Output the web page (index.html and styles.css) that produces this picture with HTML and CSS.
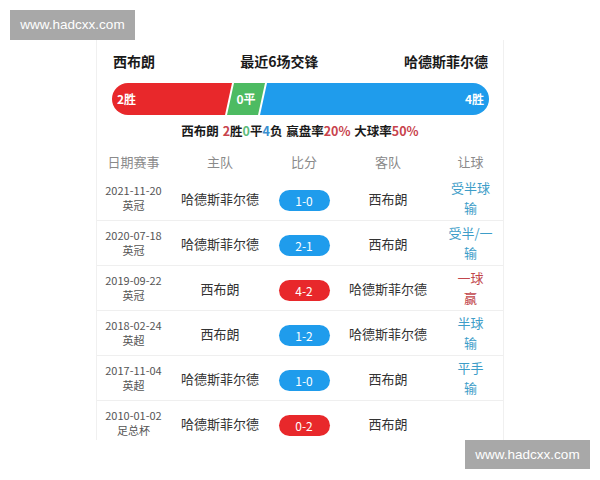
FILE: index.html
```html
<!DOCTYPE html>
<html lang="zh">
<head>
<meta charset="utf-8">
<link rel="stylesheet" href="styles.css">
</head>
<body>
<div class="page">
  <div class="card">
    <div class="head">
      <span class="team">西布朗</span>
      <span class="title">最近6场交锋</span>
      <span class="team">哈德斯菲尔德</span>
    </div>
    <div class="bar">
      <div class="seg win">2胜</div>
      <div class="seg draw">0平</div>
      <div class="seg lose">4胜</div>
    </div>
    <div class="stats">西布朗 <span class="r">2</span>胜<span class="g">0</span>平<span class="b">4</span>负 赢盘率<span class="r">20%</span> 大球率<span class="r">50%</span></div>
    <div class="table">
      <div class="row th">
        <div>日期赛事</div><div>主队</div><div>比分</div><div>客队</div><div>让球</div>
      </div>
      <div class="row">
        <div class="date">2021-11-20<br>英冠</div>
        <div class="tm">哈德斯菲尔德</div>
        <div><span class="pill blue">1-0</span></div>
        <div class="tm">西布朗</div>
        <div class="hc lose-t">受半球<br>输</div>
      </div>
      <div class="row">
        <div class="date">2020-07-18<br>英冠</div>
        <div class="tm">哈德斯菲尔德</div>
        <div><span class="pill blue">2-1</span></div>
        <div class="tm">西布朗</div>
        <div class="hc lose-t">受半/一<br>输</div>
      </div>
      <div class="row">
        <div class="date">2019-09-22<br>英冠</div>
        <div class="tm">西布朗</div>
        <div><span class="pill red">4-2</span></div>
        <div class="tm">哈德斯菲尔德</div>
        <div class="hc win-t">一球<br>赢</div>
      </div>
      <div class="row">
        <div class="date">2018-02-24<br>英超</div>
        <div class="tm">西布朗</div>
        <div><span class="pill blue">1-2</span></div>
        <div class="tm">哈德斯菲尔德</div>
        <div class="hc lose-t">半球<br>输</div>
      </div>
      <div class="row">
        <div class="date">2017-11-04<br>英超</div>
        <div class="tm">哈德斯菲尔德</div>
        <div><span class="pill blue">1-0</span></div>
        <div class="tm">西布朗</div>
        <div class="hc lose-t">平手<br>输</div>
      </div>
      <div class="row">
        <div class="date">2010-01-02<br>足总杯</div>
        <div class="tm">哈德斯菲尔德</div>
        <div><span class="pill red">0-2</span></div>
        <div class="tm">西布朗</div>
        <div class="hc"></div>
      </div>
    </div>
  </div>
  <div class="wm wm-tl">www.hadcxx.com</div>
  <div class="wm wm-br">www.hadcxx.com</div>
</div>
</body>
</html>
```

FILE: styles.css
```css
html, body {
  margin: 0;
  padding: 0;
  background: #fff;
}
body {
  font-family: "Noto Sans CJK SC", "Noto Sans", sans-serif;
  color: #222;
}
.page {
  position: relative;
  width: 600px;
  height: 480px;
  padding-top: 40px;
  box-sizing: border-box;
}
.card {
  margin-left: 96px;
  width: 408px;
  height: 400px;
  box-sizing: border-box;
  border-left: 1px solid #f0f0f0;
  border-right: 1px solid #f0f0f0;
  overflow: hidden;
}
.head {
  display: flex;
  justify-content: space-between;
  align-items: center;
  padding: 10px 15px 0 16px;
  height: 22px;
  font-size: 14px;
  font-weight: bold;
  line-height: 22px;
  color: #1a1a1a;
}
.bar {
  display: flex;
  margin: 11px 14px 0 15px;
  height: 32px;
  border-radius: 16px;
  overflow: hidden;
  font-size: 12px;
  font-weight: bold;
  color: #fff;
  line-height: 32px;
}
.seg {
  height: 32px;
}
.win {
  width: 120px;
  background: #e8282b;
  padding-left: 5px;
  box-sizing: border-box;
  clip-path: polygon(0 0, 100% 0, calc(100% - 7px) 100%, 0 100%);
}
.draw {
  width: 38px;
  margin-left: -5px;
  background: #4dbb62;
  text-align: center;
  clip-path: polygon(7px 0, 100% 0, calc(100% - 7px) 100%, 0 100%);
}
.lose {
  flex: 1;
  margin-left: -5px;
  background: #1f9cec;
  text-align: right;
  padding-right: 5px;
  clip-path: polygon(7px 0, 100% 0, 100% 100%, 0 100%);
}
.stats {
  margin-top: 6px;
  height: 20px;
  line-height: 20px;
  text-align: center;
  font-size: 12.5px;
  font-weight: bold;
  color: #1a1a1a;
  padding-left: 0;
  word-spacing: 1px;
}
.stats .r { color: #c8434d; }
.stats .g { color: #5dbb7b; }
.stats .b { color: #3a8fd0; }
.table {
  margin-top: 5px;
}
.row {
  display: grid;
  grid-template-columns: 73px 100px 68px 100px 65px;
  align-items: center;
  height: 44px;
  border-bottom: 1px solid #efefef;
  text-align: center;
}
.row.th {
  height: 30px;
  border-bottom: none;
  font-size: 13px;
  color: #8a8a8a;
}
.date {
  font-size: 11px;
  line-height: 15px;
  color: #555;
}
.tm {
  font-size: 13px;
  color: #333;
}
.pill {
  display: inline-block;
  width: 51px;
  height: 21px;
  line-height: 21px;
  border-radius: 11px;
  color: #fff;
  font-size: 12px;
  vertical-align: middle;
}
.pill.blue { background: #1f9cec; }
.pill.red { background: #e8282b; }
.hc {
  font-size: 13px;
  line-height: 20px;
}
.lose-t { color: #3d9dc8; }
.win-t { color: #c2474c; }
.wm {
  position: absolute;
  background: #a8a8a8;
  color: #fff;
  font-family: "Liberation Sans", Arial, sans-serif;
  font-size: 13.5px;
  text-align: center;
}
.wm-tl {
  left: 10px;
  top: 10px;
  width: 125px;
  height: 30px;
  line-height: 30px;
}
.wm-br {
  left: 465px;
  top: 440px;
  width: 125px;
  height: 29px;
  line-height: 29px;
}
```
